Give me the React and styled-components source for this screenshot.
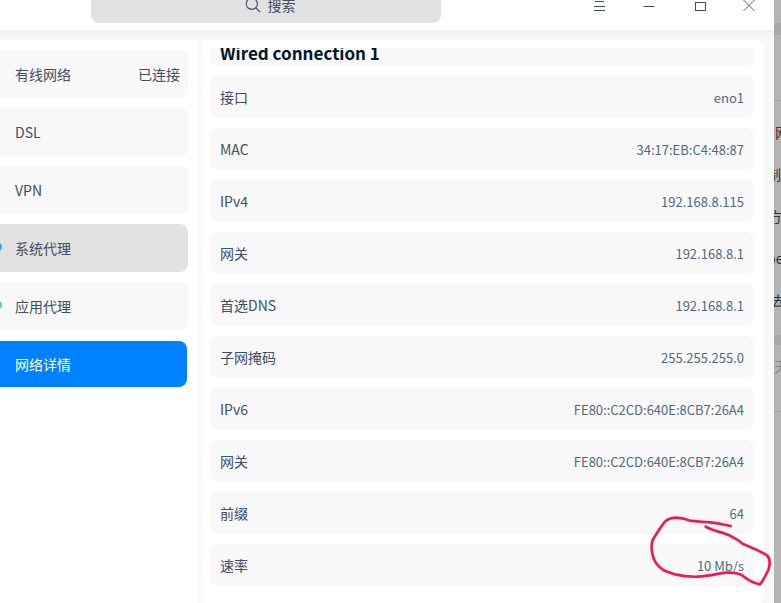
import React from "react";
import styled, { createGlobalStyle } from "styled-components";

const Global = createGlobalStyle`
  html, body { margin: 0; padding: 0; background: #b4b4b4; }
  body { font-family: "Noto Sans CJK SC", "Noto Sans", sans-serif; }
`;

const Screen = styled.div`
  position: relative;
  width: 781px;
  height: 603px;
  overflow: hidden;
  display: flex;
`;

const Window = styled.div`
  width: 774px;
  height: 603px;
  flex: none;
  display: flex;
  flex-direction: column;
  background: #fff;
`;

const TitleBar = styled.header`
  height: 30px;
  flex: none;
  display: flex;
  align-items: flex-start;
  overflow: hidden;
  background: #fff;
`;

const SearchBox = styled.div`
  width: 350px;
  height: 36px;
  margin: -13px 0 0 91px;
  padding-left: 8px;
  box-sizing: border-box;
  flex: none;
  border-radius: 8px;
  background: #e2e2e2;
  display: flex;
  align-items: center;
  justify-content: center;
  gap: 7px;
  color: #414d68;
  font-size: 14px;
  line-height: 20px;
`;

const Controls = styled.div`
  margin-left: auto;
  display: flex;
`;

const ControlButton = styled.button`
  width: 50px;
  height: 14px;
  padding: ${(p) => (p.$nudge ? `0 0 0 ${p.$nudge}px` : "0")};
  border: 0;
  background: none;
  display: flex;
  justify-content: center;
  align-items: flex-start;
  color: #414d68;
`;

const Body = styled.div`
  flex: 1;
  min-height: 0;
  display: flex;
  gap: 3px;
  padding: 10px 10px 0 0;
  background: linear-gradient(#efefef 0, #f8f8f8 10px);
`;

const Sidebar = styled.nav`
  width: 198px;
  flex: none;
  padding-top: 10px;
  box-sizing: border-box;
  background: #fff;
  border-radius: 0 4px 0 0;
  display: flex;
  flex-direction: column;
  gap: 10px;
`;

const NavItem = styled.div`
  position: relative;
  width: ${(p) => (p.$selected ? 197 : 198)}px;
  height: ${(p) => (p.$selected ? 46 : 48)}px;
  margin: ${(p) => (p.$selected ? "1px 0 0 -10px" : "0 0 0 -10px")};
  padding: 0 8px 0 25px;
  box-sizing: border-box;
  display: flex;
  align-items: center;
  justify-content: space-between;
  border-radius: 8px;
  font-size: 14px;
  color: ${(p) => (p.$selected ? "#fff" : "#414d68")};
  background: ${(p) => (p.$selected ? "#0081ff" : p.$hover ? "#e2e2e2" : "#f8f8f8")};
  ${(p) =>
    p.$dot
      ? `&::before {
    content: "";
    position: absolute;
    left: 4px;
    top: 19px;
    width: 8px;
    height: 8px;
    border-radius: 50%;
    background: ${p.$dot};
  }`
      : ""}
`;

const Panel = styled.main`
  flex: 1;
  min-width: 0;
  padding: 8px 10px 0 9px;
  background: #fff;
  border-radius: 4px 8px 8px 0;
  display: flex;
  flex-direction: column;
  gap: 10px;
`;

const TitleRow = styled.div`
  height: 18px;
  flex: none;
  overflow: hidden;
  padding-left: 10px;
  background: #f8f8f8;
  border-radius: 0 0 8px 8px;
  color: #00162c;
  font-size: 17px;
  font-weight: 700;
  line-height: 9px;
`;

const Row = styled.div`
  height: 42px;
  flex: none;
  padding: 0 10px;
  box-sizing: border-box;
  display: flex;
  align-items: center;
  justify-content: space-between;
  background: #f8f8f8;
  border-radius: 8px;
`;

const Label = styled.span`
  color: #414d68;
  font-size: 14px;
`;

const Value = styled.span`
  color: #526a7f;
  font-size: 13px;
`;

const Backdrop = styled.aside`
  flex: 1;
  min-width: 0;
  overflow: hidden;
  display: flex;
  flex-direction: column;
  color: #333;
  font-size: 14px;
  background: #b4b4b4;
`;

const Band = styled.div`
  flex: none;
  height: ${(p) => p.$h}px;
  background: ${(p) => p.$bg || "transparent"};
  border-bottom: ${(p) => (p.$line ? "1px solid #a3a3a3" : "0")};
  box-sizing: border-box;
`;

const BackLine = styled.div`
  height: 42px;
  flex: none;
  display: flex;
  align-items: center;
  white-space: nowrap;
  color: ${(p) => p.$color || "#333"};
  & > span { margin-left: ${(p) => p.$shift}px; flex: none; }
`;

const Scribble = styled.svg`
  position: absolute;
  left: 640px;
  top: 505px;
  pointer-events: none;
`;

const details = [
  ["接口", "eno1"],
  ["MAC", "34:17:EB:C4:48:87"],
  ["IPv4", "192.168.8.115"],
  ["网关", "192.168.8.1"],
  ["首选DNS", "192.168.8.1"],
  ["子网掩码", "255.255.255.0"],
  ["IPv6", "FE80::C2CD:640E:8CB7:26A4"],
  ["网关", "FE80::C2CD:640E:8CB7:26A4"],
  ["前缀", "64"],
  ["速率", "10 Mb/s"],
];

const backLines = [
  ["网", 1],
  ["制", -7],
  ["方", -6],
  ["be", -7],
  ["去", -3],
];

export default function App() {
  return (
    <Screen>
      <Global />
      <Window>
        <TitleBar>
          <SearchBox>
            <svg width="16" height="16" viewBox="0 0 16 16" fill="none" stroke="#414d68" strokeWidth="1.1">
              <circle cx="6.8" cy="6.8" r="5.6" />
              <path d="M10.8 10.8 15 15" />
            </svg>
            <span>搜索</span>
          </SearchBox>
          <Controls>
            <ControlButton>
              <svg width="11" height="12" viewBox="0 0 11 12" fill="none" stroke="currentColor">
                <path d="M1 1.5h9M0 6.5h11M0 10.5h11" />
              </svg>
            </ControlButton>
            <ControlButton>
              <svg width="12" height="12" viewBox="0 0 12 12" fill="none" stroke="currentColor">
                <path d="M0.5 6.5h11" />
              </svg>
            </ControlButton>
            <ControlButton $nudge={2}>
              <svg width="11" height="12" viewBox="0 0 11 12" fill="none" stroke="currentColor">
                <rect x="0.5" y="2.5" width="10" height="8" />
              </svg>
            </ControlButton>
            <ControlButton>
              <svg width="12" height="12" viewBox="0 0 12 12" fill="none" stroke="currentColor" strokeWidth="0.9">
                <path d="M0.5 0 11.5 11M11.5 0 0.5 11" />
              </svg>
            </ControlButton>
          </Controls>
        </TitleBar>
        <Body>
          <Sidebar>
            <NavItem>
              <span>有线网络</span>
              <span>已连接</span>
            </NavItem>
            <NavItem>DSL</NavItem>
            <NavItem>VPN</NavItem>
            <NavItem $hover $dot="#2ba6e8">系统代理</NavItem>
            <NavItem $dot="#5cc4ec">应用代理</NavItem>
            <NavItem $selected>网络详情</NavItem>
          </Sidebar>
          <Panel>
            <TitleRow>Wired connection 1</TitleRow>
            {details.map(([label, value], i) => (
              <Row key={i}>
                <Label>{label}</Label>
                <Value>{value}</Value>
              </Row>
            ))}
          </Panel>
        </Body>
      </Window>
      <Backdrop>
        <Band $h={23} />
        <Band $h={12} $bg="#a9a9a9" />
        <Band $h={66} $line />
        <Band $h={10} />
        {backLines.map(([text, shift]) => (
          <BackLine key={text} $shift={shift}>
            <span>{text}</span>
          </BackLine>
        ))}
        <Band $h={14} />
        <Band $h={10} $bg="#a9a9a9" />
        <BackLine $shift={0} $color="#7d8896">
          <span>天</span>
        </BackLine>
        <Band $h={25} $line />
      </Backdrop>
      <Scribble width="141" height="98" viewBox="0 0 423 294" fill="none">
        <path
          d="M272 63 C250 58 230 54 210 52 C190 50 165 50 150 47 C138 42 130 38 105 38 C90 40 82 43 75 50 C65 62 50 85 38 105 C34 118 34 135 38 150 C42 170 55 185 70 195 C85 203 95 205 105 208 C125 213 150 216 175 215 C205 214 235 205 260 203 C280 202 295 205 305 210 C320 222 340 235 360 238 C368 230 375 215 385 195 C392 175 390 160 380 150 C365 140 340 130 305 115 C298 105 285 102 270 92 C250 82 215 77 197 65"
          stroke="#f5174f"
          strokeWidth="8"
          strokeLinecap="round"
          strokeLinejoin="round"
        />
      </Scribble>
    </Screen>
  );
}
